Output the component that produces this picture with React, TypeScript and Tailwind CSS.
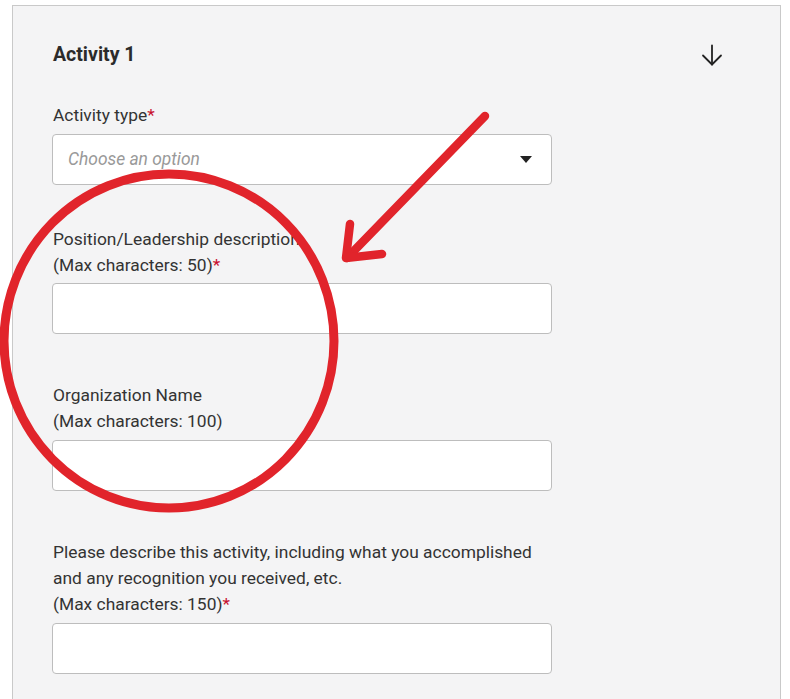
const Req = () => <span className="text-[#c8102e]">*</span>;

const TextBox = () => (
  <div className="h-[51px] w-[500px] rounded-[4px] border border-[#bdbdbd] bg-white" />
);

const App = () => {
  return (
    <div className="relative h-[699px] w-[790px] overflow-hidden bg-white font-['Roboto',sans-serif] text-[#333]">
      <div className="ml-[12px] mt-[5px] h-full w-[769px] border-x border-t border-[#c9c9c9] bg-[#f4f4f5] pl-[39px] pt-[35px]">
        {/* header */}
        <div className="flex h-[28px] items-center justify-between pr-[57px]">
          <h2 className="pl-[1px] text-[19.5px] font-bold leading-[28px] text-[#2b2b2b]">Activity 1</h2>
          <svg width="22" height="22" viewBox="0 0 22 22" fill="none" stroke="#222" strokeWidth="1.8" strokeLinecap="round" strokeLinejoin="round">
            <path d="M11 1.5V20.5" />
            <path d="M2 11.5L11 20.5L20 11.5" />
          </svg>
        </div>

        <div className="mt-[33px] pl-[1px] text-[17.4px] leading-[26px]">
          <label>
            Activity type<Req />
          </label>
        </div>
        <div className="mt-[6px] flex h-[51px] w-[500px] items-center justify-between rounded-[4px] border border-[#bdbdbd] bg-white pl-[15px] pr-[19px]">
          <span className="text-[17.4px] italic text-[#999]">Choose an option</span>
          <svg width="12" height="7" viewBox="0 0 12 7">
            <path d="M0 0H12L6 7Z" fill="#222" />
          </svg>
        </div>

        <div className="mt-[41px] pl-[1px] text-[17.4px] leading-[26px]">
          Position/Leadership description
          <br />
          (Max characters: 50)<Req />
        </div>
        <div className="mt-[5px]">
          <TextBox />
        </div>

        <div className="mt-[48px] pl-[1px] text-[17.4px] leading-[26px]">
          Organization Name
          <br />
          (Max characters: 100)
        </div>
        <div className="mt-[6px]">
          <TextBox />
        </div>

        <div className="mt-[48px] pl-[1px] text-[17.4px] leading-[26px]">
          Please describe this activity, including what you accomplished
          <br />
          and any recognition you received, etc.
          <br />
          (Max characters: 150)<Req />
        </div>
        <div className="mt-[6px]">
          <TextBox />
        </div>
      </div>

      {/* hand-drawn annotation */}
      <svg className="pointer-events-none absolute left-0 top-0" width="790" height="699" viewBox="0 0 790 699" fill="none" stroke="#e1242b" strokeLinecap="round" strokeLinejoin="round">
        <ellipse cx="169" cy="341" rx="165" ry="167" strokeWidth="9" />
        <path d="M485 116L347 258" strokeWidth="8.5" />
        <path d="M350 224L346 258L382 254" strokeWidth="8.5" />
      </svg>
    </div>
  );
};

export default App;
